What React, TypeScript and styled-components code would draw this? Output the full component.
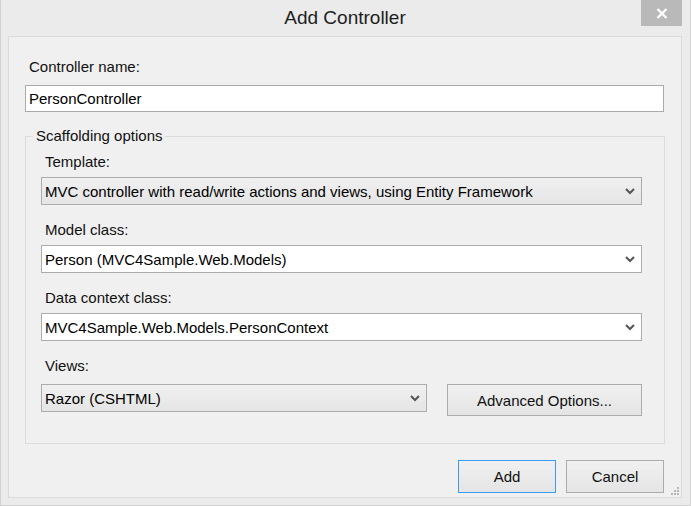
import React from "react";
import styled, { createGlobalStyle } from "styled-components";

const GlobalStyle = createGlobalStyle`
  html, body {
    margin: 0;
    padding: 0;
    background: #ebebeb;
  }
  body {
    font-family: "Liberation Sans", Arial, sans-serif;
    color: #000;
  }
  * {
    box-sizing: border-box;
  }
`;

const Window = styled.div`
  width: 691px;
  height: 506px;
  background: #ebebeb;
  border: 1px solid #d2d2d2;
  border-top: none;
  padding: 0 8px 7px 7px;
  display: flex;
  flex-direction: column;
`;

const TitleBar = styled.div`
  height: 36px;
  flex: none;
  display: grid;
  grid-template-columns: 1fr auto 1fr;
  align-items: start;
`;

const Title = styled.div`
  grid-column: 2;
  font-size: 19px;
  line-height: 36px;
  color: #1e1e1e;
`;

const CloseButton = styled.div`
  grid-column: 3;
  justify-self: end;
  width: 41px;
  height: 26px;
  background: #b9b9b9;
  display: flex;
  align-items: center;
  justify-content: center;
`;

const Panel = styled.div`
  flex: 1;
  position: relative;
  background: #f0f0f0;
  border: 1px solid #dadada;
  padding: 20px 16px 3px;
  display: flex;
  flex-direction: column;
`;

const Label = styled.div<{ $gap?: number }>`
  font-size: 15px;
  line-height: 20px;
  color: #111;
  padding-left: 4px;
  margin-bottom: ${({ $gap }) => $gap ?? 5}px;
`;

const TextBox = styled.div`
  height: 27px;
  margin-right: 1px;
  background: #fff;
  border: 1px solid #ababab;
  padding: 0 3px;
  display: flex;
  align-items: center;
  font-size: 15px;
`;

const Group = styled.fieldset`
  margin: 14px 0 0;
  border: 1px solid #dcdcdc;
  padding: 6px 22px 27px 15px;
  min-width: 0;
`;

const Legend = styled.legend`
  margin-left: -8px;
  padding: 0 3px;
  font-size: 15px;
  line-height: 20px;
  color: #111;
`;

const Field = styled.div`
  & + & {
    margin-top: 15px;
  }
`;

const Combo = styled.div<{ $editable?: boolean; $width?: number }>`
  height: 28px;
  width: ${({ $width }) => ($width ? `${$width}px` : "auto")};
  border: 1px solid #acacac;
  background: ${({ $editable }) =>
    $editable ? "#fff" : "linear-gradient(#f0f0f0, #e5e5e5)"};
  padding: 0 6px 0 3px;
  display: flex;
  align-items: center;
  justify-content: space-between;
  font-size: 15px;
  white-space: nowrap;
`;

const Row = styled.div`
  display: flex;
  align-items: flex-start;
  gap: 20px;
`;

const Button = styled.button<{ $primary?: boolean; $width: number; $height: number }>`
  width: ${({ $width }) => $width}px;
  height: ${({ $height }) => $height}px;
  border: 1px solid ${({ $primary }) => ($primary ? "#3c9bf5" : "#acacac")};
  background: linear-gradient(#f0f0f0, #e5e5e5);
  font-family: inherit;
  font-size: 15px;
  color: #111;
  padding: 0;
  margin: 0;
`;

const Footer = styled.div`
  margin-top: 16px;
  margin-right: 1px;
  display: flex;
  justify-content: flex-end;
  gap: 10px;
`;

const Grip = styled.svg`
  position: absolute;
  right: 1px;
  bottom: 1px;
`;

const Chevron = () => (
  <svg width="10" height="7" viewBox="0 0 10 7">
    <polyline points="1,1 5,5 9,1" fill="none" stroke="#555" strokeWidth="2" />
  </svg>
);

const Dropdown = ({
  value,
  editable,
  width,
}: {
  value: string;
  editable?: boolean;
  width?: number;
}) => (
  <Combo $editable={editable} $width={width}>
    <span>{value}</span>
    <Chevron />
  </Combo>
);

export default function App() {
  return (
    <>
      <GlobalStyle />
      <Window>
        <TitleBar>
          <Title>Add Controller</Title>
          <CloseButton>
            <svg width="12" height="11" viewBox="0 0 12 11">
              <path d="M1.5 1 L10.5 10 M10.5 1 L1.5 10" stroke="#fff" strokeWidth="2.4" />
            </svg>
          </CloseButton>
        </TitleBar>

        <Panel>
          <Label $gap={8}>Controller name:</Label>
          <TextBox>PersonController</TextBox>

          <Group>
            <Legend>Scaffolding options</Legend>
            <Field>
              <Label>Template:</Label>
              <Dropdown value="MVC controller with read/write actions and views, using Entity Framework" />
            </Field>
            <Field>
              <Label>Model class:</Label>
              <Dropdown value="Person (MVC4Sample.Web.Models)" editable />
            </Field>
            <Field>
              <Label>Data context class:</Label>
              <Dropdown value="MVC4Sample.Web.Models.PersonContext" editable />
            </Field>
            <Field>
              <Label $gap={8}>Views:</Label>
              <Row>
                <Dropdown value="Razor (CSHTML)" width={386} />
                <Button $width={195} $height={32}>
                  Advanced Options...
                </Button>
              </Row>
            </Field>
          </Group>

          <Footer>
            <Button $primary $width={98} $height={33}>
              Add
            </Button>
            <Button $width={98} $height={33}>
              Cancel
            </Button>
          </Footer>

          <Grip width="9" height="9" viewBox="0 0 9 9">
            <g fill="#b4b4b4">
              <rect x="6" y="0" width="2" height="2" />
              <rect x="3" y="3" width="2" height="2" />
              <rect x="6" y="3" width="2" height="2" />
              <rect x="0" y="6" width="2" height="2" />
              <rect x="3" y="6" width="2" height="2" />
              <rect x="6" y="6" width="2" height="2" />
            </g>
          </Grip>
        </Panel>
      </Window>
    </>
  );
}
